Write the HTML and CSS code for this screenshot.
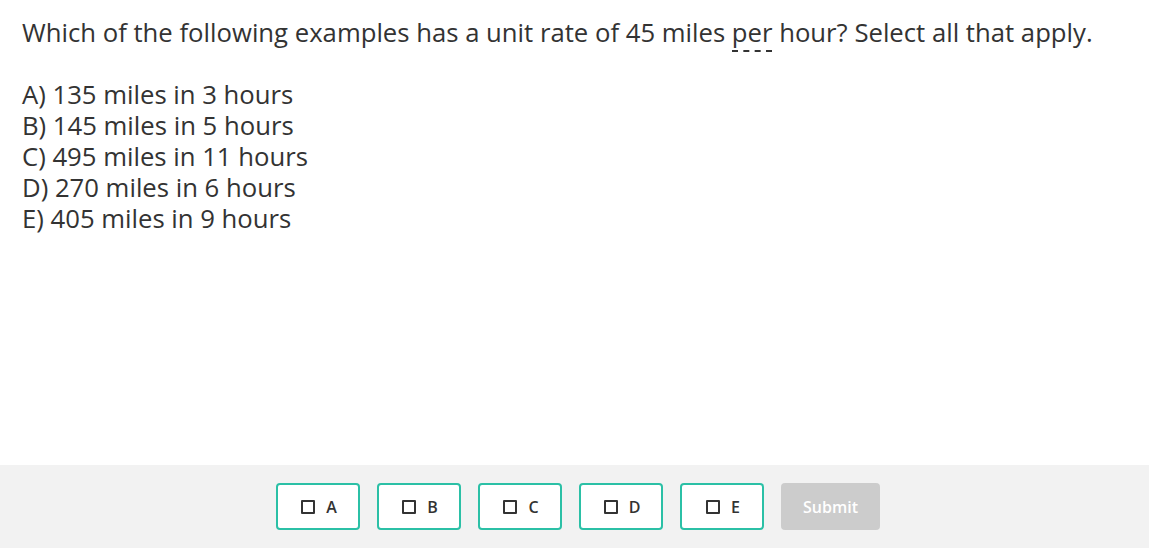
FILE: index.html
```html
<!DOCTYPE html>
<html>
<head>
<meta charset="utf-8">
<link rel="stylesheet" href="styles.css">
</head>
<body>
<div class="page">
  <main class="content">
    <p class="question">Which of the following examples has a unit rate of 45 miles <span class="term">per</span> hour? Select all that apply.</p>
    <div class="choices">
      <div class="choice">A) 135 miles in 3 hours</div>
      <div class="choice">B) 145 miles in 5 hours</div>
      <div class="choice">C) 495 miles in 11 hours</div>
      <div class="choice">D) 270 miles in 6 hours</div>
      <div class="choice">E) 405 miles in 9 hours</div>
    </div>
  </main>
  <footer class="footer">
    <button class="opt"><span class="box"></span>A</button>
    <button class="opt"><span class="box"></span>B</button>
    <button class="opt"><span class="box"></span>C</button>
    <button class="opt"><span class="box"></span>D</button>
    <button class="opt"><span class="box"></span>E</button>
    <button class="submit">Submit</button>
  </footer>
</div>
</body>
</html>
```
FILE: styles.css
```css
html, body {
  margin: 0;
  padding: 0;
  background: #fff;
}
body {
  font-family: "Open Sans", "Liberation Sans", sans-serif;
  color: #333;
}
.page {
  width: 1149px;
  height: 548px;
  display: flex;
  flex-direction: column;
}
.content {
  flex: 1;
  padding: 17px 22px 0;
  font-size: 25.7px;
  line-height: 31px;
}
.question {
  margin: 0 0 31px;
}
.term {
  border-bottom: 2px dashed #333;
}
.choice {
  height: 31px;
}
.footer {
  height: 83px;
  background: #f2f2f2;
  display: flex;
  align-items: center;
  justify-content: center;
  gap: 17px;
  padding-left: 7px;
}
.opt {
  width: 84px;
  height: 47px;
  background: #fff;
  border: 2px solid #2bc0a6;
  border-radius: 4px;
  display: flex;
  align-items: center;
  justify-content: center;
  gap: 11px;
  font-family: "Open Sans", sans-serif;
  font-weight: 600;
  font-size: 16px;
  color: #333;
  padding: 0 0 0 2px;
}
.box {
  width: 10px;
  height: 10px;
  border: 2px solid #333;
  border-radius: 1px;
}
.submit {
  width: 99px;
  height: 47px;
  background: #cccccc;
  border: none;
  border-radius: 4px;
  color: #fff;
  font-family: "Open Sans", sans-serif;
  font-weight: 600;
  font-size: 16px;
}
```
